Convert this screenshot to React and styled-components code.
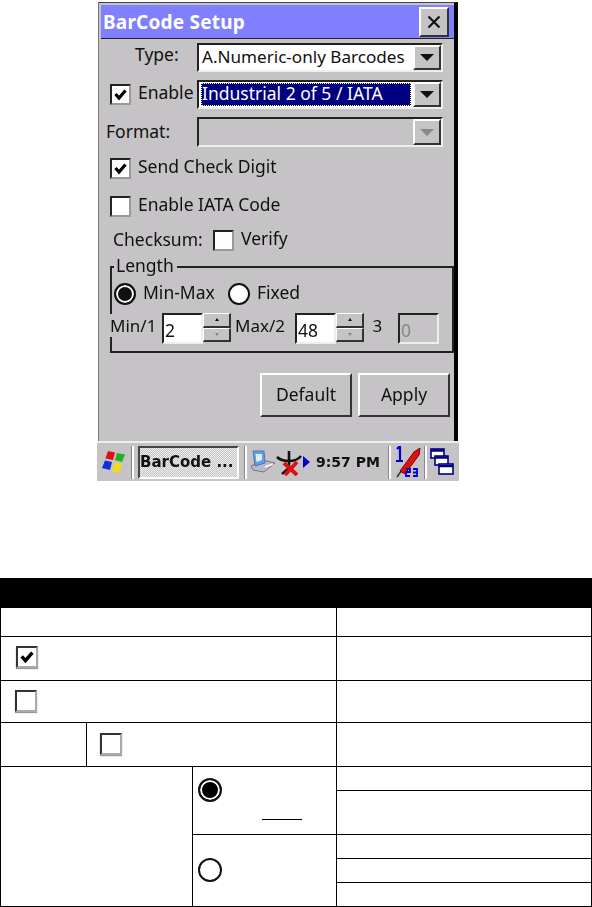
import React from 'react';
import styled, { createGlobalStyle, css } from 'styled-components';

const GRAY = '#c6c3c6';

const Global = createGlobalStyle`
  html, body { margin: 0; padding: 0; background: #fff; }
  body { font-family: "Noto Sans", "Liberation Sans", sans-serif; color: #111; }
`;

const Page = styled.div`
  width: 592px;
  height: 907px;
  overflow: hidden;
  background: #fff;
`;

const Device = styled.div`
  width: 362px;
  height: 481px;
  margin-left: 97px;
  display: flex;
  flex-direction: column;
  filter: blur(0.5px);
`;

const Dialog = styled.div`
  flex: 1;
  margin: 2px 1px 0 1px;
  padding: 2px 0 0 2px;
  background: ${GRAY};
  border-left: 1px solid #777;
  border-right: 4px solid #000;
  border-top: 1px solid #444;
  display: flex;
  flex-direction: column;
`;

const TitleBar = styled.div`
  height: 33px;
  flex: none;
  background: #8080ff;
  border-bottom: 1px solid #222;
  display: flex;
  align-items: center;
  justify-content: space-between;
  padding: 0 5px 0 2px;
`;

const Title = styled.div`
  color: #fff;
  font: 700 19px "Noto Sans", sans-serif;
  letter-spacing: 0.2px;
`;

const raised = css`
  background: ${GRAY};
  border-style: solid;
  border-width: 2px;
  border-color: #fff #333 #333 #fff;
  box-sizing: border-box;
`;

const sunken = css`
  border-style: solid;
  border-width: 2px;
  border-color: #222 #eee #eee #222;
  box-sizing: border-box;
`;

const CloseButton = styled.div`
  ${raised}
  width: 30px;
  height: 30px;
  display: flex;
  align-items: center;
  justify-content: center;
`;

const Form = styled.div`
  flex: 1;
  display: flex;
  flex-direction: column;
`;

const FieldRow = styled.div`
  display: flex;
  align-items: center;
  height: ${p => p.$h || 29}px;
  margin-top: ${p => p.$top || 0}px;
`;

const FieldLabel = styled.div`
  width: 96px;
  flex: none;
  display: flex;
  align-items: center;
  padding-left: ${p => p.$left || 0}px;
  box-sizing: border-box;
  font-size: 17.5px;
  line-height: 24px;
`;

const FieldText = styled.span`
  margin-top: -${p => p.$lift || 2}px;
`;

const Combo = styled.div`
  ${sunken}
  width: 246px;
  height: 100%;
  display: flex;
  background: ${p => (p.$disabled ? GRAY : '#fff')};
  padding-left: ${p => (p.$selected ? 2 : 0)}px;
`;

const ComboText = styled.div`
  flex: 1;
  font-size: 17.1px;
  line-height: 24px;
  padding-left: 3px;
  white-space: nowrap;
  overflow: hidden;
`;

const SelectedText = styled.div`
  flex: 1;
  margin: 1px 2px 1px 0;
  background: #000080;
  color: #fff;
  outline: 1px dotted #ff9;
  outline-offset: -1px;
  font-size: 17.5px;
  line-height: 21px;
  padding-left: 1px;
  white-space: nowrap;
`;

const ComboButton = styled.div`
  ${raised}
  width: 28px;
  flex: none;
  display: flex;
  align-items: center;
  justify-content: center;
`;

const Arrow = styled.div`
  width: 0;
  height: 0;
  border-left: 7px solid transparent;
  border-right: 7px solid transparent;
  border-top: 7px solid ${p => (p.$disabled ? '#888' : '#111')};
`;

const Check = styled.div`
  ${sunken}
  width: 21px;
  height: 21px;
  flex: none;
  background: #fff;
  border-color: #222 #999 #999 #222;
  margin-left: ${p => p.$left || 0}px;
  display: flex;
  align-items: center;
  justify-content: center;
`;

const CheckLabel = styled.span`
  font-size: 17.5px;
  line-height: 21px;
  margin-top: -4px;
  margin-left: 7px;
  white-space: nowrap;
`;

const PlainLabel = styled.span`
  font-size: 17.5px;
  line-height: 21px;
  margin-top: -3px;
  margin-left: ${p => p.$left || 0}px;
  margin-right: ${p => p.$right || 0}px;
  width: ${p => (p.$w ? `${p.$w}px` : 'auto')};
  flex: none;
  white-space: nowrap;
`;

const Group = styled.fieldset`
  margin: 6px 0 0 9px;
  padding: 0;
  width: 344px;
  height: 96px;
  box-sizing: border-box;
  border: 2px solid #222;
  min-inline-size: 0;
`;

const GroupLegend = styled.legend`
  margin-left: 2px;
  padding: 0 3px 4px 2px;
  font-size: 17.5px;
  line-height: 16px;
`;

const RadioRow = styled.div`
  display: flex;
  align-items: center;
  height: 22px;
  margin-top: 6px;
  padding-left: 2px;
`;

const Radio = styled.div`
  width: 22px;
  height: 22px;
  flex: none;
  border-radius: 50%;
  border: 2px solid #111;
  box-sizing: border-box;
  background: ${p => (p.$on ? '#111' : '#fff')};
  box-shadow: ${p => (p.$on ? 'inset 0 0 0 2px #fff' : 'none')};
`;

const LengthRow = styled.div`
  display: flex;
  align-items: flex-start;
  margin: 8px 0 0 -2px;
  height: 31px;
`;

const LengthLabel = styled.span`
  font-size: 17px;
  line-height: 22px;
  padding-top: 1px;
  margin-top: 1px;
  width: ${p => p.$w}px;
  flex: none;
  background: ${GRAY};
  white-space: nowrap;
`;

const NumberBox = styled.div`
  ${sunken}
  width: 41px;
  height: 31px;
  flex: none;
  background: ${p => (p.$disabled ? GRAY : '#fff')};
  color: ${p => (p.$disabled ? '#888' : '#111')};
  font-size: 17.5px;
  line-height: 30px;
  padding-left: 1px;
`;

const Spinner = styled.div`
  width: 28px;
  height: 29px;
  flex: none;
  margin-right: 4px;
  display: flex;
  flex-direction: column;
`;

const SpinPart = styled.div`
  ${raised}
  border-width: 1px 2px 2px 1px;
  flex: 1;
  display: flex;
  align-items: center;
  justify-content: center;
`;

const SpinArrow = styled.div`
  width: 0;
  height: 0;
  border-left: 2.5px solid transparent;
  border-right: 2.5px solid transparent;
  ${p =>
    p.$down
      ? 'border-top: 3px solid #888;'
      : 'border-bottom: 3px solid #111;'}
`;

const ButtonRow = styled.div`
  display: flex;
  justify-content: flex-end;
  gap: 6px;
  margin-top: 20px;
  padding-right: 4px;
`;

const PushButton = styled.div`
  ${raised}
  width: 92px;
  height: 44px;
  display: flex;
  align-items: center;
  justify-content: center;
  font-size: 17.5px;
  padding-bottom: 3px;
`;

const TaskBar = styled.div`
  height: 40px;
  flex: none;
  background: ${GRAY};
  border-top: 2px solid #eee;
  box-sizing: border-box;
  display: flex;
  align-items: center;
  padding: 0 5px 0 4px;
`;

const TaskDivider = styled.div`
  width: 1px;
  height: 33px;
  flex: none;
  background: #888;
  border-right: 2px solid #fff;
  margin: 0 ${p => p.$right || 3}px 0 ${p => p.$left || 3}px;
`;

const TaskButton = styled.div`
  width: 101px;
  height: 33px;
  flex: none;
  box-sizing: border-box;
  border-style: solid;
  border-width: 2px;
  border-color: #444 #fff #fff #444;
  background-color: #fff;
  background-image: repeating-conic-gradient(${GRAY} 0 25%, #eee 0 50%);
  background-size: 2px 2px;
  font: 700 15px "DejaVu Sans", sans-serif;
  line-height: 28px;
  white-space: nowrap;
  overflow: hidden;
`;

const Clock = styled.div`
  font: 700 14px "DejaVu Sans", sans-serif;
  margin-left: 6px;
  white-space: nowrap;
  width: 66px;
`;

const TableWrap = styled.div`
  margin-top: 97px;
`;

const SpecTable = styled.table`
  width: 591px;
  border-collapse: collapse;
  table-layout: fixed;
`;

const HeadCell = styled.th`
  background: #000;
  border: 1px solid #000;
  padding: 0;
  height: 28px;
`;

const Cell = styled.td`
  border: 1px solid #000;
  padding: 0;
  height: ${p => p.$h}px;
  vertical-align: top;
`;

const TableCheck = styled.div`
  ${sunken}
  width: 22px;
  height: 22px;
  margin: ${p => p.$m};
  background: #fff;
  border-color: #333 #aaa #aaa #333;
  box-shadow: 0 1px 1px #999;
  display: flex;
  align-items: center;
  justify-content: center;
  filter: blur(0.3px);
`;

const TableRadio = styled.div`
  width: 24px;
  height: 24px;
  box-sizing: border-box;
  border-radius: 50%;
  border: 2px solid #111;
  margin: ${p => p.$m};
  background: ${p => (p.$on ? '#000' : '#fff')};
  box-shadow: ${p => (p.$on ? 'inset 0 0 0 2px #fff' : 'none')};
`;

const Underline = styled.div`
  width: 40px;
  height: 1px;
  background: #000;
  margin: 17px 0 0 69px;
`;

const CheckMark = ({ size = 15 }) => (
  <svg width={size} height={size} viewBox="0 0 15 15">
    <path d="M2.5 7 L6 11 L12.5 3.5" fill="none" stroke="#000" strokeWidth="3.2" />
  </svg>
);

const CloseIcon = () => (
  <svg width="14" height="14" viewBox="0 0 14 14">
    <path d="M1.5 1.5 L12.5 12.5 M12.5 1.5 L1.5 12.5" stroke="#111" strokeWidth="2.2" />
  </svg>
);

const WindowsFlag = () => (
  <svg width="25" height="25" viewBox="0 0 25 25">
    <path d="M7 1 L14 2.5 L12 10 L4.5 8.5 Z" fill="#e01010" />
    <path d="M16 3 L24 4.5 L21 12 L14 10 Z" fill="#20b020" />
    <path d="M4 10.5 L11 12 L9 20 L1 18 Z" fill="#1030e0" />
    <path d="M13.5 12.5 L20.5 14 L18 23 L11 21 Z" fill="#f0e010" />
  </svg>
);

const NetworkIcon = () => (
  <svg width="26" height="26" viewBox="0 0 26 26">
    <path d="M1 17 L12 11 L25 14 L14 23 L3 21 Z" fill="#b8bcc8" stroke="#777" />
    <path d="M3 2 H14 L15 14 L5 17 Z" fill="#5f9fe8" stroke="#5a70a8" />
    <path d="M5.5 5 H12 V11 L6.5 13 Z" fill="#d8f0ff" />
    <path d="M15 18 L23 15" stroke="#fff" strokeWidth="1.5" />
  </svg>
);

const SignalIcon = () => (
  <svg width="27" height="27" viewBox="0 0 27 27">
    <path d="M1 8 Q5 12 13 12 Q21 12 25 7 M13 2 V19 M13 19 L6 25 M13 19 L20 25" fill="none" stroke="#111" strokeWidth="2.6" />
    <path d="M8 14 L21 26 M21 13 L9 26" stroke="#e01010" strokeWidth="3.8" />
  </svg>
);

const SmallPlay = () => (
  <svg width="7" height="12" viewBox="0 0 7 12">
    <path d="M0 0 L7 6 L0 12 Z" fill="#0000c0" />
  </svg>
);

const PenIcon = () => (
  <svg width="29" height="32" viewBox="0 0 29 32">
    <path d="M4 31 L9 24" stroke="#333" strokeWidth="1.5" />
    <path d="M7 25 L21 6 L27 2 L26 9 L12 28 Z" fill="#e01010" stroke="#700" />
    <path d="M4 3 L6 1 H7 V15 M3 15 H10" fill="none" stroke="#0000d0" strokeWidth="2.2" />
    <path d="M13 23 H17 V26 H13 V30 H17 M20 23 H24 V30 H20 M20 26.5 H24" fill="none" stroke="#0000d0" strokeWidth="1.8" />
  </svg>
);

const WindowsIcon = () => (
  <svg width="24" height="28" viewBox="0 0 24 28">
    <g fill="#fff" stroke="#000080" strokeWidth="1.6">
      <rect x="1" y="1" width="13" height="9" />
      <rect x="5" y="8" width="13" height="9" />
      <rect x="9" y="16" width="14" height="10" />
    </g>
    <path d="M1 2.5 H14 M5 9.5 H18 M9 18 H23" stroke="#000080" strokeWidth="2.6" />
  </svg>
);

const SetupDialog = () => (
  <Dialog>
    <TitleBar>
      <Title>BarCode Setup</Title>
      <CloseButton><CloseIcon /></CloseButton>
    </TitleBar>
    <Form>
      <FieldRow $top={4}>
        <FieldLabel $left={34}><FieldText $lift={7}>Type:</FieldText></FieldLabel>
        <Combo>
          <ComboText>A.Numeric-only Barcodes</ComboText>
          <ComboButton><Arrow /></ComboButton>
        </Combo>
      </FieldRow>
      <FieldRow $top={8}>
        <FieldLabel $left={9}>
          <Check><CheckMark /></Check>
          <CheckLabel>Enable</CheckLabel>
        </FieldLabel>
        <Combo $selected>
          <SelectedText>Industrial 2 of 5 / IATA</SelectedText>
          <ComboButton><Arrow /></ComboButton>
        </Combo>
      </FieldRow>
      <FieldRow $top={8} $h={30}>
        <FieldLabel $left={5}><FieldText>Format:</FieldText></FieldLabel>
        <Combo $disabled>
          <ComboText />
          <ComboButton><Arrow $disabled /></ComboButton>
        </Combo>
      </FieldRow>
      <FieldRow $top={11} $h={21}>
        <Check $left={9}><CheckMark /></Check>
        <CheckLabel>Send Check Digit</CheckLabel>
      </FieldRow>
      <FieldRow $top={17} $h={21}>
        <Check $left={9} />
        <CheckLabel>Enable IATA Code</CheckLabel>
      </FieldRow>
      <FieldRow $top={13} $h={21}>
        <PlainLabel $left={12} $w={90}>Checksum:</PlainLabel>
        <Check $left={10} />
        <CheckLabel>Verify</CheckLabel>
      </FieldRow>
      <Group>
        <GroupLegend>Length</GroupLegend>
        <RadioRow>
          <Radio $on />
          <PlainLabel $left={7} $w={85}>Min-Max</PlainLabel>
          <Radio />
          <PlainLabel $left={7}>Fixed</PlainLabel>
        </RadioRow>
        <LengthRow>
          <LengthLabel $w={52}>Min/1</LengthLabel>
          <NumberBox>2</NumberBox>
          <Spinner>
            <SpinPart><SpinArrow /></SpinPart>
            <SpinPart><SpinArrow $down /></SpinPart>
          </Spinner>
          <LengthLabel $w={60}>Max/2</LengthLabel>
          <NumberBox>48</NumberBox>
          <Spinner>
            <SpinPart><SpinArrow /></SpinPart>
            <SpinPart><SpinArrow $down /></SpinPart>
          </Spinner>
          <LengthLabel $w={30}>&nbsp;3</LengthLabel>
          <NumberBox $disabled>0</NumberBox>
        </LengthRow>
      </Group>
      <ButtonRow>
        <PushButton>Default</PushButton>
        <PushButton>Apply</PushButton>
      </ButtonRow>
    </Form>
  </Dialog>
);

const StartBar = () => (
  <TaskBar>
    <WindowsFlag />
    <TaskDivider $left={5} $right={4} />
    <TaskButton>BarCode ...</TaskButton>
    <TaskDivider $left={5} $right={3} />
    <NetworkIcon />
    <SignalIcon />
    <SmallPlay />
    <Clock>9:57 PM</Clock>
    <TaskDivider $left={6} $right={2} />
    <PenIcon />
    <TaskDivider $left={2} $right={3} />
    <WindowsIcon />
  </TaskBar>
);

const FunctionTable = () => (
  <TableWrap>
    <SpecTable>
      <colgroup>
        <col style={{ width: 86 }} />
        <col style={{ width: 106 }} />
        <col style={{ width: 144 }} />
        <col style={{ width: 255 }} />
      </colgroup>
      <thead>
        <tr>
          <HeadCell colSpan={3} />
          <HeadCell />
        </tr>
      </thead>
      <tbody>
        <tr>
          <Cell colSpan={3} $h={28} />
          <Cell />
        </tr>
        <tr>
          <Cell colSpan={3} $h={43}>
            <TableCheck $m="9px 0 0 15px"><CheckMark size={16} /></TableCheck>
          </Cell>
          <Cell />
        </tr>
        <tr>
          <Cell colSpan={3} $h={41}>
            <TableCheck $m="9px 0 0 14px" />
          </Cell>
          <Cell />
        </tr>
        <tr>
          <Cell $h={43} />
          <Cell colSpan={2}>
            <TableCheck $m="10px 0 0 13px" />
          </Cell>
          <Cell />
        </tr>
        <tr>
          <Cell colSpan={2} rowSpan={5} />
          <Cell rowSpan={2}>
            <TableRadio $on $m="11px 0 0 5px" />
            <Underline />
          </Cell>
          <Cell $h={23} />
        </tr>
        <tr>
          <Cell $h={43} />
        </tr>
        <tr>
          <Cell rowSpan={3}>
            <TableRadio $m="23px 0 0 5px" />
          </Cell>
          <Cell $h={23} />
        </tr>
        <tr>
          <Cell $h={23} />
        </tr>
        <tr>
          <Cell $h={23} />
        </tr>
      </tbody>
    </SpecTable>
  </TableWrap>
);

export default function App() {
  return (
    <Page>
      <Global />
      <Device>
        <SetupDialog />
        <StartBar />
      </Device>
      <FunctionTable />
    </Page>
  );
}
